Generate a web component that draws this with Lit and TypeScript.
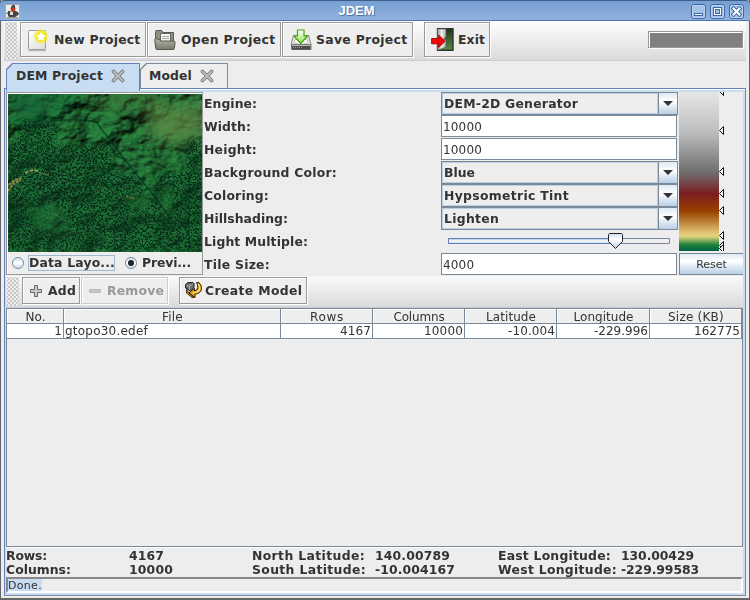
import { LitElement, html, css, svg } from "lit";
import { customElement, property } from "lit/decorators.js";
import { styleMap } from "lit/directives/style-map.js";

const ctx = document.createElement("canvas").getContext("2d")!;

/** A run of text tracked so that it occupies `w` pixels. */
@customElement("fit-text")
class FitText extends LitElement {
  @property() text = "";
  @property({ type: Number }) w = 0;
  @property({ type: Boolean }) plain = false;
  static styles = css`
    :host { display: inline-block; white-space: pre; font: bold 12.4px/14px "DejaVu Sans", sans-serif; }
    :host([plain]) { font-weight: normal; font-size: 12px; }
  `;
  render() {
    ctx.font = `${this.plain ? "normal 12px" : "bold 12.4px"} "DejaVu Sans"`;
    const gap = this.w ? (this.w - ctx.measureText(this.text).width) / this.text.length : 0;
    return html`<span style=${styleMap({ letterSpacing: `${gap.toFixed(3)}px` })}>${this.text}</span>`;
  }
}

const t = (text: string, w = 0) => html`<fit-text .text=${text} .w=${w}></fit-text>`;
const p = (text: string, w = 0) => html`<fit-text plain .plain=${true} .text=${text} .w=${w}></fit-text>`;

const newIcon = html`<svg width="22" height="24" viewBox="0 0 22 24">
  <defs><radialGradient id="g"><stop offset=".35" stop-color="#f8f000"/><stop offset=".75" stop-color="#f5ef30" stop-opacity=".75"/><stop offset="1" stop-color="#f5ef60" stop-opacity="0"/></radialGradient>
  <linearGradient id="pg" x2="1" y2="1"><stop stop-color="#fff"/><stop offset="1" stop-color="#dcdcdc"/></linearGradient></defs>
  <path d="M1 22.5h18" stroke="#bbb" stroke-width="1.5"/>
  <rect x="1.5" y="2.5" width="17" height="19" rx="1" fill="url(#pg)" stroke="#999"/>
  <circle cx="14" cy="8.500" r="8" fill="url(#g)"/>
  <path d="M14 3l1.800 3.200 3.700.800-2.500 2.700.400 3.800-3.400-1.500-3.400 1.500.400-3.800L8.500 7l3.700-.800z" fill="#fff" stroke="#eadc00" stroke-width=".8"/></svg>`;

const openIcon = html`<svg width="22" height="22" viewBox="0 0 22 22">
  <defs><linearGradient id="f" x2="0" y2="1"><stop stop-color="#b5b7a8"/><stop offset="1" stop-color="#777a6c"/></linearGradient></defs>
  <path d="M1.500 18V2.500q0-1 1-1h5l1.500 2h10.500V18z" fill="#8d907f" stroke="#55574c"/>
  <path d="M6.500 4.500h10v11h-10z" fill="#f4f4f4" stroke="#666"/><path d="M8 7.500h7M8 9.500h7" stroke="#aaa"/>
  <path d="M.700 10.500q0-1 1-.900l3 .900h1l1 1.500h13q1.500 0 1.400 1.300l-.800 6.200q0 1-1 1H3q-1 0-1.200-1z" fill="url(#f)" stroke="#55574c"/></svg>`;

const saveIcon = html`<svg width="22" height="22" viewBox="0 0 22 22">
  <defs><linearGradient id="a" x2="0" y2="1"><stop stop-color="#fff"/><stop offset="1" stop-color="#8be04a"/></linearGradient></defs>
  <path d="M3.500 6.500h15l2.500 9H1z" fill="#e5e5e5" stroke="#888"/><ellipse cx="11" cy="12.500" rx="7" ry="3" fill="#f8f8f8" stroke="#bbb"/>
  <path d="M1.500 15.500h19.500v5H1.500z" fill="#bbb" stroke="#777"/><path d="M2 17h18.500v3.500H2z" fill="#4c4c4c"/><path d="M3 18.500h9" stroke="#999" stroke-dasharray="1 1"/>
  <path d="M7.500 1h6.500v6h3.500l-6.700 7.500L4 7h3.500z" fill="url(#a)" stroke="#4ca30d" stroke-width="1.200"/></svg>`;

const exitIcon = html`<svg width="23" height="23" viewBox="0 0 23 23">
  <defs><linearGradient id="d" x2="0" y2="1"><stop stop-color="#1c3418"/><stop offset="1" stop-color="#5d8c43"/></linearGradient>
  <linearGradient id="dr" x2="1"><stop stop-color="#999"/><stop offset=".5" stop-color="#eee"/><stop offset="1" stop-color="#aaa"/></linearGradient></defs>
  <path d="M6.500 .700h15.500v21.500H6.500z" fill="url(#d)" stroke="#333" stroke-width="1.400"/>
  <path d="M6.500 1h8.500v18l-7.500 3h-1z" fill="url(#dr)" stroke="#555" stroke-width=".6"/><path d="M14 9v3" stroke="#222"/>
  <path d="M.600 10.500h7V7l6.500 6.200-6.500 6.300v-3.700h-7z" fill="#f10808" stroke="#a00" stroke-width=".9"/></svg>`;

const closeX = html`<svg width="14" height="14" viewBox="0 0 14 14">
  <path d="M2.500 2.500l9 9M11.500 2.500l-9 9" stroke="#777" stroke-width="3.600" stroke-linecap="round"/>
  <path d="M2.500 2.500l9 9M11.500 2.500l-9 9" stroke="#bdbdbd" stroke-width="1.800" stroke-linecap="round"/></svg>`;

const plusIcon = html`<svg width="12" height="12" viewBox="0 0 12 12"><path d="M4.500.500h3v4h4v3h-4v4h-3v-4h-4v-3h4z" fill="#c9c9c9" stroke="#666"/></svg>`;
const minusIcon = html`<svg width="12" height="12" viewBox="0 0 12 12"><path d="M.500 4.500h11v3H.500z" fill="#c4c4c4" stroke="#bbb"/></svg>`;

const modelIcon = html`<svg width="17" height="17" viewBox="0 0 17 17">
  <path d="M3 .600h5l1 1v4L5.500 9 .600 6V2.500z" fill="#6f6f6f" stroke="#111"/><path d="M1.500 3l3 1 3.500-2M4.500 4v4" stroke="#bbb" fill="none" stroke-width=".8"/>
  <path d="M11.500.600h2.500q3 3 2.400 7-1 4-6.400 4.500v3.500L4 10.800 9.500 6.500v2.500q3-.5 3.300-3.500.2-2.500-1.300-4.900z" fill="#eda91e" stroke="#291800"/>
  <path d="M1.500 7.500L4 11l5 4.500H7L1.500 11z" fill="#c98510" stroke="#291800" stroke-width=".8"/>
  <path d="M13.300 2q2.700 4 .700 6.500-1.500 2-5.500 2.200" stroke="#ffe896" fill="none" stroke-width="1.200"/></svg>`;

const cup = html`<svg width="15" height="15" viewBox="0 0 15 15"><path d="M.500.500h14v14H.500z" fill="#ecebe8" stroke="#aaa"/>
  <path d="M3 7h8.500v5l-2 1.500H5L3 12z" fill="#444"/><path d="M5 7.500h3v3.500H5z" fill="#ddd"/><path d="M11 8.500h2v2.500h-2M1.500 10l2-2M6 6l1-4 2-1 1 4z" stroke="#333" fill="#555"/><circle cx="8.300" cy="5.800" r="2" fill="#d42c1c"/><path d="M2 13.500h11" stroke="#999"/></svg>`;

const winBtn = (glyph: unknown) => html`<svg width="15" height="15" viewBox="0 0 15 15">
  <rect x=".5" y=".5" width="14" height="14" rx="2.500" fill="#a6c2e8" stroke="#3d67a3"/><rect x="1.500" y="1.500" width="12" height="12" rx="1.500" fill="none" stroke="#bcd2ef"/>${glyph}</svg>`;
const minG = svg`<rect x="3.500" y="9.500" width="8" height="2" fill="#fff" stroke="#3e69a4"/>`;
const maxG = svg`<rect x="3.500" y="3.500" width="8" height="8" fill="#fff" stroke="#3e69a4"/><rect x="5.500" y="5.500" width="4" height="4" fill="#a6c2e8" stroke="#3e69a4"/>`;
const xG = svg`<path d="M4.500 4.500l6 6M10.500 4.500l-6 6" stroke="#3e69a4" stroke-width="4" stroke-linecap="square"/><path d="M4.500 4.500l6 6M10.500 4.500l-6 6" stroke="#fff" stroke-width="2"  stroke-linecap="square"/>`;

const terrain = html`<svg class="terrain" width="194" height="158" viewBox="0 0 194 158">
  <defs>
    <filter id="relief" x="0" y="0" width="1" height="1" color-interpolation-filters="sRGB">
      <feTurbulence type="fractalNoise" baseFrequency=".03 .04" numOctaves="4" seed="14"/>
      <feColorMatrix values="0 0 0 0 0 0 0 0 0 0 0 0 0 0 0 1 0 0 0 0"/>
      <feDiffuseLighting surfaceScale="11" diffuseConstant="1.150" lighting-color="#247538"><feDistantLight azimuth="225" elevation="52"/></feDiffuseLighting>
    </filter>
    <filter id="speck" x="0" y="0" width="1" height="1" color-interpolation-filters="sRGB">
      <feTurbulence type="fractalNoise" baseFrequency=".48 .52" numOctaves="2" seed="7"/>
      <feColorMatrix values="0 0 0 0 .02 0 0 0 0 .15 0 0 0 0 .09 12 0 0 0 -5.900"/>
    </filter>
    <filter id="soft"><feGaussianBlur stdDeviation="2"/></filter>
    <filter id="haze" x="-.5" y="-.5" width="2" height="2"><feGaussianBlur stdDeviation="8"/></filter>
    <mask id="m"><path d="M14 25l38 3-6 23 55-1 6 26 22 8 12 22 9-26 27-3 2-30 15-2v112H0V50l12-8z" fill="#fff" filter="url(#soft)"/>
      <path d="M20 112l30-2 14 22-16 10-22-7zM118 98l24 5-3 16-20-9zM150 90l3 30 12 4-2-32z" fill="#000" opacity=".75" filter="url(#soft)"/></mask>
  </defs>
  <rect width="194" height="158" fill="#16602f"/>
  <rect width="194" height="158" filter="url(#relief)"/>
  <path d="M14 25l38 3-6 23 55-1 6 26 22 8 12 22 9-26 27-3 2-30 15-2v112H0V50l12-8z" fill="#155f2f" opacity=".5" filter="url(#soft)"/>
  <g filter="url(#haze)"><path d="M140 12l60-2v32l-30 8-30-8z" fill="#648c46" opacity=".7"/><path d="M85 0h70v12H90z" fill="#4e6630" opacity=".5"/><path d="M0 0h70L35 22 0 24z" fill="#0d6037" opacity=".8"/><path d="M2 115h18v20H0z" fill="#043020" opacity=".7"/></g>
  <rect width="194" height="158" filter="url(#speck)" mask="url(#m)" opacity=".85"/>
  <g fill="none" stroke="#06331f" opacity=".7"><path d="M43 27q28-3 45 1l14 18 23 30 18 22 22 30" stroke-width="1.500"/><path d="M181 82v76" stroke-width="1.200"/><path d="M93 43l7 5 8 14 11 4" stroke-width="2"/></g>
  <g fill="none" stroke="#a8975a"><path d="M17 79l7-3 7 1" stroke-width="1.500" stroke-dasharray="4 1"/><path d="M1 91l5-5 7-2M0 97l6-8 7-3" stroke="#8c8748" stroke-width="2" stroke-dasharray="3 1"/><path d="M31 79l10 2M47 120l5 3M118 102l9 3" stroke="#857f3c" stroke-dasharray="3 1"/></g>
</svg>`;

const stops = [-1, 38, 79, 101, 118, 143, 153, 156];
const arrows = html`<svg width="10" height="159" viewBox="0 0 10 159">${stops.map(
  (y) => svg`<path d=${`M4.500 ${y - 3.5}v8l-4-4z`} fill="#f6f6f6" stroke="#111"/>`)}</svg>`;

const combo = (text: string, w: number) => html`<div class="combo"><div class="val">${t(text, w)}</div><div class="drop"></div></div>`;
const field = (text: string) => html`<div class="field">${p(text, text.length * 7.8)}</div>`;

@customElement("app-root")
class AppRoot extends LitElement {
  static styles = css`
    :host { display: block; width: 750px; height: 600px; overflow: hidden; color: #333; font: bold 12px/14px "DejaVu Sans", sans-serif; background: #5d5d5d; }
    * { box-sizing: border-box; }
    svg { display: block; flex: none; }
    .win { height: 600px; display: flex; flex-direction: column; background: #ededed; border: solid #666; border-width: 0 1px 2px; }
    .title { height: 21px; flex: none; margin: 0 -1px; padding: 1px 6px 0 5px; display: flex; align-items: center; border-top: 1px solid #3f5f8b; border-bottom: 1px solid #4d77b0; background: linear-gradient(#769fd3, #91b2de); border-radius: 4px 4px 0 0; }
    .name { flex: 1; text-align: center; font: bold 13px/16px "Liberation Sans", sans-serif; color: #fff; text-shadow: 1px 1px 1px #456fa5; padding-left: 2px; }
    .btns { display: flex; gap: 4px; }
    .inner { flex: 1; margin: 0 3px; display: flex; flex-direction: column; min-height: 0; }
    .bar { height: 40px; flex: none; display: flex; align-items: flex-start; padding: 1px 3px 0 0; background: linear-gradient(#fff, #dadada); border-bottom: 1px solid #ccc; }
    .grip { width: 12px; align-self: stretch; margin: 0 3px 1px 1px; background-color: #eee; background-image: radial-gradient(circle, #999 .6px, transparent .8px), radial-gradient(circle, #999 .6px, transparent .8px); background-size: 4px 4px; background-position: 0 0, 2px 2px; }
    .tb { height: 35px; border: 1px solid #999; box-shadow: inset 1px 1px #fff, 1px 1px #fff; background: #eee; display: flex; align-items: center; }
    .prog { margin: 9px 0 0 auto; width: 95px; height: 17px; border: 1px solid #999; box-shadow: inset 1px 1px #fff, 1px 1px #fff; background: #808080; }
    .tabs { height: 27px; flex: none; padding: 2px 0 0 2px; display: flex; }
    .tab { width: 88px; height: 25px; display: flex; align-items: center; background: #7a8a99; clip-path: polygon(6px 0, 100% 0, 100% 100%, 0 100%, 0 6px); padding: 1px 1px 0; }
    .tab > div { height: 100%; flex: 1; display: flex; align-items: center; gap: 8px; padding-left: 8px; background: #eee; clip-path: polygon(6px 0, 100% 0, 100% 100%, 0 100%, 0 6px); }
    .tab.on { width: 134px; background: #6382bf; position: relative; height: 28px; z-index: 1; }
    .tab.on > div { background: #c8ddf2; padding: 0 0 3px 9px; }
    .pane { flex: 1; min-height: 0; display: flex; flex-direction: column; border: 1px solid #6382bf; border-right-color: #7a8a99; border-bottom-color: #7a8a99; box-shadow: inset 0 1px #fff, inset 0 3px #c8ddf2, inset 1px 0 #c8ddf2, inset -2px 0 #c8ddf2, inset 0 -2px #c8ddf2; padding: 3px 2px 2px 1px; margin-bottom: 2px; }
    .top { height: 184px; flex: none; display: flex; }
    .prev { width: 197px; height: 183px; border: 1px solid #999; box-shadow: inset 1px 1px #fff; padding: 1px; }
    .terrain { width: 194px; height: 158px; }
    .radios { display: flex; align-items: center; height: 22px; padding-left: 4px; }
    .radio { width: 12px; height: 12px; flex: none; border-radius: 50%; border: 1px solid #7a8a99; background: linear-gradient(#d3e2f0, #fff 55%, #c8daea); display: grid; place-items: center; }
    .radio.sel::after { content: ""; width: 6px; height: 6px; border-radius: 50%; background: #222; }
    .foc { height: 16px; margin: 0 10px 0 4px; border: 1px solid #9eb7d3; line-height: 12px; width: 87px; white-space: nowrap; }
    .prv { margin-left: 5px; }
    .form { width: 474px; padding-left: 1px; display: grid; grid-template-columns: 237px 237px; grid-template-rows: repeat(8, 23px); }
    .form > fit-text { margin-top: 5px; }
    .combo { height: 23px; border: 1px solid #7a8a99; display: flex; background: #eee; }
    .val { flex: 1; border: 1px solid #b8cfe5; padding: 3px 0 0 1px; }
    .drop { width: 19px; border-left: 1px solid #7a8a99; background: linear-gradient(#dfe9f3, #fff 40%, #b8cfe5); display: grid; place-items: center; }
    .drop::after { content: ""; border: 5px solid transparent; border-top-color: #333; border-bottom: 0; }
    .field { height: 22px; width: 236px; border: 1px solid #7a8a99; background: #fff; padding: 4px 0 0 1px; }
    .slide { padding: 3px 0 0 7px; }
    .ramp { width: 40px; height: 159px; background: linear-gradient(#e6e6e6, #bdbdbd 25%, #707070 50%, #7b1d22 64%, #994000 75%, #e4c878 89%, #ded27c 91%, #21803a 96%, #006146); }
    .side { width: 64px; margin-left: 1px; padding-left: 1px; }
    .sc { display: flex; height: 161px; }
    .reset { height: 22px; width: 64px; border: 1px solid #7a8a99; border-right: 0; background: linear-gradient(#dce8f3, #fff 35%, #b8cfe5); text-align: center; padding-top: 4px; font: 11px/14px "DejaVu Sans", sans-serif; }
    .bar2 { height: 32px; background: linear-gradient(#fafafa, #dadada); padding-top: 1px; }
    .bar2 .tb { height: 27px; }
    .bar2 fit-text { margin-top: 1px; }
    .bar2 .dis { color: #999; border-color: #ccc; }
    .table { flex: 1; border: 1px solid #7a8a99; min-height: 0; box-shadow: 0 1px #fff; }
    .row { display: grid; grid-template-columns: 57px 217px 92px 92px 92px 93px 92px; height: 15px; }
    .row div { overflow: hidden; text-align: right; background: #fff; border-right: 1px solid #7a8a99; border-bottom: 1px solid #7a8a99; white-space: nowrap; padding-right: 1px; }
    .row .l { text-align: left; padding-left: 1px; }
    .row.head div { text-align: center; background: #eee; box-shadow: inset 1px 1px #fff; padding: 1px 0 0 1px; }
    .stats { height: 30px; flex: none; display: grid; grid-template-columns: 123px 123px 123px 123px 123px 1fr; grid-template-rows: 14px 14px; padding-top: 2px; }
    .status { height: 16px; flex: none; border: 2px solid; border-color: #888 #fff #fff #888; }
    .status span { background: #c8ddf2; display: inline-block; height: 12px; font: 11px/13px "DejaVu Sans", sans-serif; letter-spacing: .3px; vertical-align: top; }
  `;

  render() {
    const btn = (w: number, icon: unknown, label: string, tw: number, pad: number, gap: number, mr: number, cls = "") =>
      html`<div class="tb ${cls}" style=${styleMap({ width: `${w}px`, paddingLeft: `${pad}px`, gap: `${gap}px`, marginRight: `${mr}px` })}>${icon}${t(label, tw)}</div>`;
    const row = (cells: [string, number][], cls = "") =>
      html`<div class="row ${cls}">${cells.map(([s, w], i) => html`<div class=${i === 1 && !cls ? "l" : ""}>${p(s, w)}</div>`)}</div>`;
    return html`<div class="win">
      <div class="title">${cup}<div class="name">JDEM</div><div class="btns">${winBtn(minG)}${winBtn(maxG)}${winBtn(xG)}</div></div>
      <div class="inner">
        <div class="bar">
          <div class="grip"></div>
          ${btn(126, newIcon, "New Project", 86.5, 6, 5, 1)}
          ${btn(134, openIcon, "Open Project", 94.5, 6, 5, 1)}
          ${btn(131, saveIcon, "Save Project", 91.5, 7, 4, 11)}
          ${btn(66, exitIcon, "Exit", 27, 6, 4, 0)}
          <div class="prog"></div>
        </div>
        <div class="tabs">
          <div class="tab on"><div>${t("DEM Project", 87)}${closeX}</div></div>
          <div class="tab"><div>${t("Model", 43)}${closeX}</div></div>
        </div>
        <div class="pane">
          <div class="top">
            <div class="prev">${terrain}
              <div class="radios"><div class="radio"></div><div class="foc">${t("Data Layo...", 86)}</div><div class="radio sel"></div><div class="prv">${t("Previ...", 49)}</div></div>
            </div>
            <div class="form">
              ${t("Engine:", 53)}${combo("DEM-2D Generator", 134)}
              ${t("Width:", 47)}${field("10000")}
              ${t("Height:", 53)}${field("10000")}
              ${t("Background Color:", 133)}${combo("Blue", 31)}
              ${t("Coloring:", 65)}${combo("Hypsometric Tint", 125)}
              ${t("Hillshading:", 84)}${combo("Lighten", 55)}
              ${t("Light Multiple:", 104)}
              <div class="slide"><svg width="224" height="18" viewBox="0 0 224 18">
                <defs><linearGradient id="tr" x2="0" y2="1"><stop stop-color="#a3b8cc"/><stop offset=".5" stop-color="#fff"/><stop offset="1" stop-color="#b8cfe5"/></linearGradient>
                <linearGradient id="th" x2="0" y2="1"><stop stop-color="#c8ddf2"/><stop offset=".4" stop-color="#fff"/><stop offset="1" stop-color="#b8cfe5"/></linearGradient></defs>
                <path d="M.500 5.500h221v5H.500z" fill="#eee" stroke="#7a8a99"/><path d="M.500 5.500h164v5H.500z" fill="url(#tr)" stroke="#6382bf"/>
                <path d="M161.500.500h12l1 1v7l-7 7-7-7v-7z" fill="url(#th)" stroke="#222"/></svg></div>
              ${t("Tile Size:", 66)}${field("4000")}
            </div>
            <div class="side"><div class="sc"><div class="ramp"></div>${arrows}</div><div class="reset">Reset</div></div>
          </div>
          <div class="bar bar2">
            <div class="grip"></div>
            ${btn(58, plusIcon, "Add", 28, 7, 6, 1)}
            ${btn(87, minusIcon, "Remove", 57, 7, 6, 11, "dis")}
            ${btn(128, modelIcon, "Create Model", 97.5, 5, 3, 0)}
          </div>
          <div class="table">
            ${row([["No.", 20], ["File", 21], ["Rows", 34], ["Columns", 51], ["Latitude", 50], ["Longitude", 60], ["Size (KB)", 56]], "head")}
            ${row([["1", 7.8], ["gtopo30.edef", 83], ["4167", 31], ["10000", 39], ["-10.004", 47], ["-229.996", 54], ["162775", 46]])}
          </div>
          <div class="stats">
            ${t("Rows:", 41)}${t("4167", 35)}${t("North Latitude:", 113)}${t("140.00789", 75)}${t("East Longitude:", 113)}${t("130.00429", 73)}
            ${t("Columns:", 65)}${t("10000", 44)}${t("South Latitude:", 114)}${t("-10.004167", 80)}${t("West Longitude:", 119)}${t("-229.99583", 78)}
          </div>
          <div class="status"><span>Done.</span></div>
        </div>
      </div>
    </div>`;
  }
}
